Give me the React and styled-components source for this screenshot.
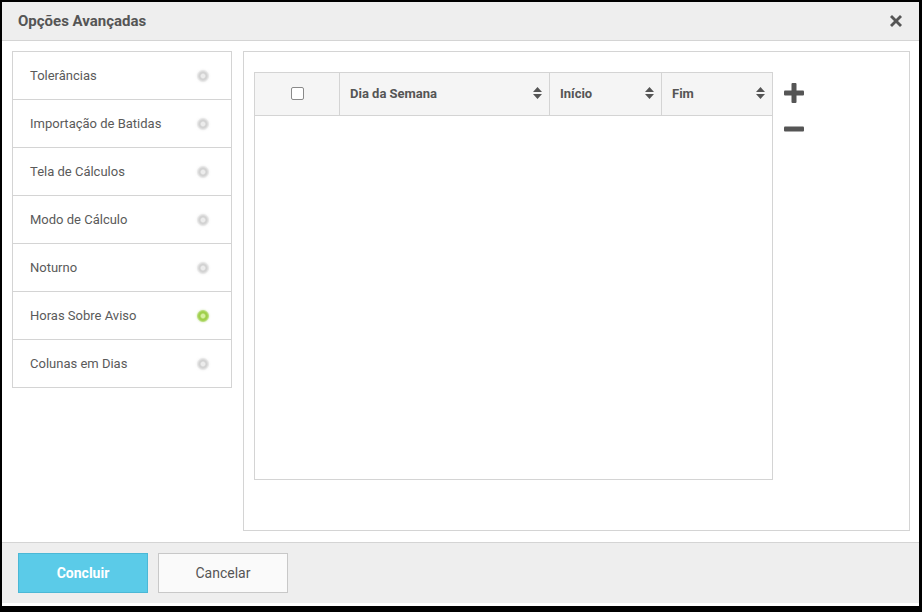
import React from "react";
import styled, { createGlobalStyle } from "styled-components";

const Global = createGlobalStyle`
  html, body {
    margin: 0;
    padding: 0;
    background: #000;
    font-family: Roboto, "Liberation Sans", sans-serif;
  }
  * { box-sizing: border-box; }
`;

const Dialog = styled.div`
  margin: 2px 0 0 2px;
  width: 917px;
  height: 604px;
  background: #fff;
  display: flex;
  flex-direction: column;
`;

const Header = styled.div`
  height: 39px;
  flex: none;
  background: #eeeeee;
  border-bottom: 1px solid #d4d4d4;
  display: flex;
  align-items: center;
  justify-content: space-between;
  padding: 0 15px 0 16px;
  h1 {
    margin: 0;
    font-size: 15px;
    font-weight: 700;
    color: #555;
  }
`;

const Close = styled.button`
  border: 0;
  background: none;
  padding: 0;
  width: 16px;
  height: 16px;
  cursor: pointer;
  display: flex;
`;

const Body = styled.div`
  flex: 1;
  display: flex;
  gap: 11px;
  padding: 10px 9px 11px 10px;
`;

const Menu = styled.ul`
  list-style: none;
  margin: 0;
  padding: 0;
  width: 220px;
  align-self: flex-start;
  border: 1px solid #d4d4d4;
`;

const MenuItem = styled.li`
  height: ${(p) => (p.first ? "47px" : "48px")};
  display: flex;
  align-items: center;
  justify-content: space-between;
  padding: 0 22px 0 17px;
  font-size: 13px;
  color: #5a5a5a;
  border-top: ${(p) => (p.first ? "0" : "1px solid #d4d4d4")};
  cursor: pointer;
`;

const Dot = styled.span`
  width: 12px;
  height: 12px;
  border-radius: 50%;
  border: 1px solid ${(p) => (p.active ? "#b6dc78" : "#e6e6e6")};
  background: ${(p) =>
    p.active
      ? "radial-gradient(circle at 50% 50%, #d6f0a0 0 25%, #9ccd45 45%, #b4dc6e 100%)"
      : "radial-gradient(circle at 50% 50%, #ececec 0 25%, #cfcfcf 45%, #eeeeee 100%)"};
  box-shadow: 0 0 2px ${(p) => (p.active ? "rgba(160,210,90,0.6)" : "rgba(210,210,210,0.5)")};
`;

const Panel = styled.div`
  flex: 1;
  border: 1px solid #d4d4d4;
  padding: 20px 10px 10px 10px;
  display: flex;
  align-items: flex-start;
  gap: 10px;
`;

const Table = styled.div`
  width: 519px;
  height: 408px;
  border: 1px solid #d4d4d4;
`;

const HeadRow = styled.div`
  display: grid;
  grid-template-columns: 84px 210px 112px 1fr;
  height: 43px;
  background: #f5f5f5;
  border-bottom: 1px solid #d4d4d4;
`;

const HeadCell = styled.div`
  display: flex;
  align-items: center;
  justify-content: ${(p) => (p.center ? "center" : "space-between")};
  padding: ${(p) => (p.center ? "0 0 1px 0" : "0 7px 1px 10px")};
  border-left: ${(p) => (p.center ? "0" : "1px solid #d4d4d4")};
  font-size: 13px;
  font-weight: 700;
  color: #555;
`;

const Check = styled.span`
  width: 13px;
  height: 13px;
  border: 1px solid #8a8a8a;
  border-radius: 2px;
  background: #fff;
  margin-left: 1px;
`;

const Tools = styled.div`
  display: flex;
  flex-direction: column;
  gap: 14px;
  padding-top: 10px;
`;

const IconBtn = styled.button`
  border: 0;
  background: none;
  padding: 0;
  width: 22px;
  height: 22px;
  display: flex;
  cursor: pointer;
`;

const Footer = styled.div`
  height: 64px;
  flex: none;
  background: #eeeeee;
  border-top: 1px solid #d4d4d4;
  border-bottom: 3px solid #fff;
  display: flex;
  align-items: center;
  gap: 10px;
  padding: 0 16px;
`;

const Button = styled.button`
  width: 130px;
  height: 40px;
  font-family: inherit;
  font-size: 14px;
  cursor: pointer;
  border: 1px solid ${(p) => (p.primary ? "#4bb8d6" : "#c8c8c8")};
  background: ${(p) => (p.primary ? "#5bcbe8" : "#fafafa")};
  color: ${(p) => (p.primary ? "#fff" : "#555")};
  font-weight: ${(p) => (p.primary ? 700 : 400)};
`;

const SortIcon = () => (
  <svg width="9" height="13" viewBox="0 0 9 13">
    <path d="M4.5 0 L9 5 H0 Z M0 7 H9 L4.5 12 Z" fill="#555" />
  </svg>
);

const items = [
  "Tolerâncias",
  "Importação de Batidas",
  "Tela de Cálculos",
  "Modo de Cálculo",
  "Noturno",
  "Horas Sobre Aviso",
  "Colunas em Dias",
];

export default function App() {
  return (
    <>
      <Global />
      <Dialog>
        <Header>
          <h1>Opções Avançadas</h1>
          <Close aria-label="Fechar">
            <svg width="16" height="16" viewBox="0 0 16 16">
              <path d="M2 4 L4 2 L8 6 L12 2 L14 4 L10 8 L14 12 L12 14 L8 10 L4 14 L2 12 L6 8 Z" fill="#555" />
            </svg>
          </Close>
        </Header>
        <Body>
          <Menu>
            {items.map((t, i) => (
              <MenuItem key={t} first={i === 0}>
                {t}
                <Dot active={i === 5} />
              </MenuItem>
            ))}
          </Menu>
          <Panel>
            <Table>
              <HeadRow>
                <HeadCell center>
                  <Check />
                </HeadCell>
                <HeadCell>
                  Dia da Semana <SortIcon />
                </HeadCell>
                <HeadCell>
                  Início <SortIcon />
                </HeadCell>
                <HeadCell>
                  Fim <SortIcon />
                </HeadCell>
              </HeadRow>
            </Table>
            <Tools>
              <IconBtn aria-label="Adicionar">
                <svg width="22" height="22" viewBox="0 0 22 22">
                  <rect x="8.5" y="1" width="5" height="20" rx="1" fill="#555" />
                  <rect x="1" y="8.5" width="20" height="5" rx="1" fill="#555" />
                </svg>
              </IconBtn>
              <IconBtn aria-label="Remover">
                <svg width="22" height="22" viewBox="0 0 22 22">
                  <rect x="1" y="8.5" width="20" height="5" rx="1" fill="#555" />
                </svg>
              </IconBtn>
            </Tools>
          </Panel>
        </Body>
        <Footer>
          <Button primary>Concluir</Button>
          <Button>Cancelar</Button>
        </Footer>
      </Dialog>
    </>
  );
}
